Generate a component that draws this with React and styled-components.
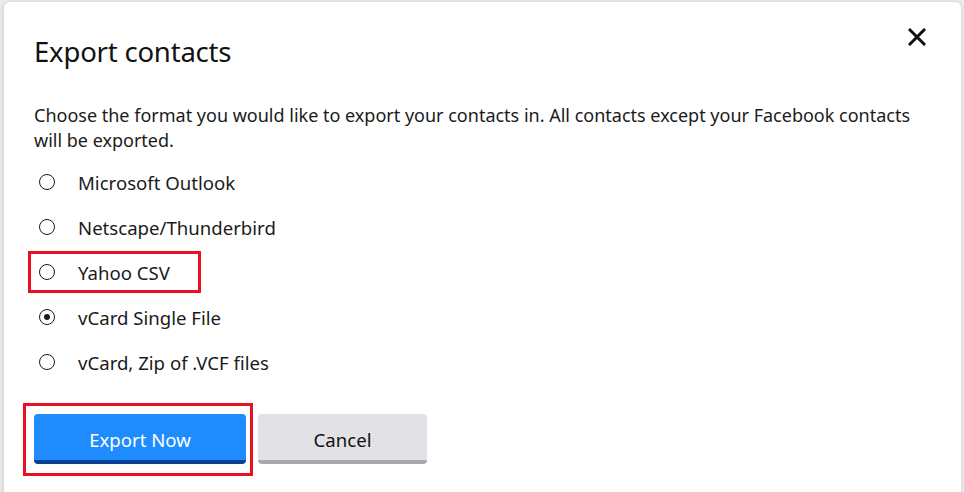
import React, { useState } from "react";
import styled, { createGlobalStyle } from "styled-components";

const GlobalStyle = createGlobalStyle`
  html, body {
    margin: 0;
    padding: 0;
    background: #ececec;
    overflow: hidden;
  }
  body {
    font-family: "Segoe UI", "Noto Sans", "Open Sans", sans-serif;
    color: #1b1b1b;
  }
`;

const Page = styled.div`
  width: 964px;
  height: 492px;
  padding: 2px 2px 0 4px;
  box-sizing: border-box;
  overflow: hidden;
`;

const Dialog = styled.div`
  position: relative;
  background: #ffffff;
  border-radius: 6px 6px 0 0;
  box-shadow: -1px 0 4px rgba(0, 0, 0, 0.12);
  border-right: 1px solid #dcdcdc;
  height: 520px;
  padding: 28px 30px 0 30px;
  box-sizing: border-box;
`;

const Header = styled.div`
  display: flex;
  justify-content: space-between;
  align-items: flex-start;
`;

const Title = styled.h1`
  margin: 0;
  font-size: 27.5px;
  font-weight: 400;
  line-height: 44px;
  letter-spacing: -0.2px;
  color: #111;
`;

const CloseButton = styled.button`
  border: none;
  background: none;
  padding: 0;
  margin: -5px 2px 0 0;
  width: 24px;
  height: 24px;
  display: flex;
  align-items: center;
  justify-content: center;
  cursor: pointer;
`;

const Description = styled.p`
  margin: 29px 0 8px;
  font-size: 18px;
  line-height: 25px;
  color: #1b1b1b;
`;

const Options = styled.div`
  display: flex;
  flex-direction: column;
  align-items: flex-start;
  gap: 3px;
`;

const Option = styled.label`
  position: relative;
  display: inline-flex;
  align-items: center;
  height: 42px;
  padding: 0 0 0 5px;
  font-size: 18.6px;
  color: #1b1b1b;
  cursor: pointer;

  ${(p) =>
    p.$highlight &&
    `
    &::after {
      content: "";
      position: absolute;
      left: -6px;
      top: 0;
      bottom: 0;
      right: -31px;
      border: 3px solid #e81123;
      pointer-events: none;
    }
  `}
`;

const Circle = styled.span`
  width: 16px;
  height: 16px;
  box-sizing: border-box;
  border: 1.6px solid #1b1b1b;
  border-radius: 50%;
  display: flex;
  align-items: center;
  justify-content: center;
  margin-right: 23px;

  &::before {
    content: "";
    width: 6px;
    height: 6px;
    border-radius: 50%;
    background: ${(p) => (p.$checked ? "#1b1b1b" : "transparent")};
  }
`;

const Actions = styled.div`
  display: flex;
  gap: 12px;
  margin-top: 31px;
`;

const Frame = styled.div`
  position: relative;
  display: flex;

  ${(p) =>
    p.$highlight &&
    `
    &::after {
      content: "";
      position: absolute;
      left: -11px;
      top: -11px;
      right: -7px;
      bottom: -12px;
      border: 3px solid #e81123;
      pointer-events: none;
    }
  `}
`;

const Button = styled.button`
  height: 50px;
  width: ${(p) => p.$width}px;
  border: none;
  border-radius: 4px;
  font-family: inherit;
  font-size: 18.6px;
  padding: 4px 0 0;
  cursor: pointer;
  background: ${(p) => (p.$primary ? "#1e8cff" : "#e2e1e6")};
  color: ${(p) => (p.$primary ? "#ffffff" : "#111111")};
  border-bottom: 4px solid ${(p) => (p.$primary ? "#0b3f94" : "#a8a8ae")};
`;

const formats = [
  "Microsoft Outlook",
  "Netscape/Thunderbird",
  "Yahoo CSV",
  "vCard Single File",
  "vCard, Zip of .VCF files",
];

export default function App() {
  const [format, setFormat] = useState("vCard Single File");

  return (
    <Page>
      <GlobalStyle />
      <Dialog>
        <Header>
          <Title>Export contacts</Title>
          <CloseButton aria-label="Close">
            <svg width="18" height="18" viewBox="0 0 18 18">
              <path
                d="M2 2 L16 16 M16 2 L2 16"
                stroke="#111"
                strokeWidth="3"
                strokeLinecap="square"
              />
            </svg>
          </CloseButton>
        </Header>
        <Description>
          Choose the format you would like to export your contacts in. All
          contacts except your Facebook contacts will be exported.
        </Description>
        <Options>
          {formats.map((f) => (
            <Option
              key={f}
              $highlight={f === "Yahoo CSV"}
              onClick={() => setFormat(f)}
            >
              <Circle $checked={format === f} />
              {f}
            </Option>
          ))}
        </Options>
        <Actions>
          <Frame $highlight>
            <Button $primary $width={212}>
              Export Now
            </Button>
          </Frame>
          <Frame>
            <Button $width={169}>Cancel</Button>
          </Frame>
        </Actions>
      </Dialog>
    </Page>
  );
}
